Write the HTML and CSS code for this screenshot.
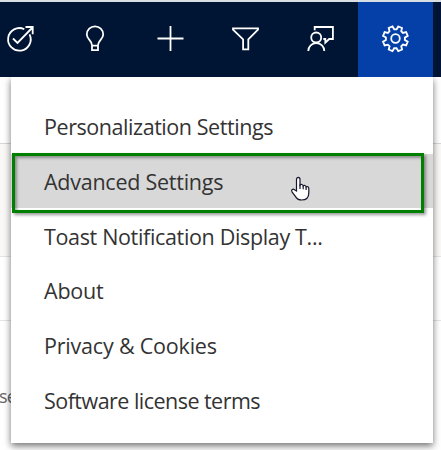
FILE: index.html
```html
<!DOCTYPE html>
<html lang="en">
<head>
<meta charset="utf-8">
<title>Settings</title>
<link rel="stylesheet" href="styles.css">
</head>
<body>
<header class="bar">
  <div class="cell"><svg viewBox="1 0 32 32"><path d="M20.300 7.200A11.300 11.300 0 1 0 25.500 12.300M9 16.500l4.500 4.500L28 6M21.500 5h7.200v7.200"/></svg></div>
  <div class="cell"><svg viewBox="0 0 32 32"><path d="M12 23.200c0-5-5.200-5.800-5.200-10.700a8.200 8.200 0 0 1 16.400 0c0 4.900-5.200 5.700-5.200 10.700v5h-6zM12 23.700h6"/></svg></div>
  <div class="cell"><svg viewBox="0 0 32 32"><path d="M15.500 4v25M2.500 16.500h26"/></svg></div>
  <div class="cell"><svg viewBox="0 0 32 32"><path d="M3 6.300h25v1.300L18.300 17.300v10h-5.200v-10L3 7.600z"/></svg></div>
  <div class="cell"><svg viewBox="0 0 32 32"><path d="M9.700 8.300V5h18.200v12h-3.700l-3.900 3.700V17h-2"/><circle cx="11.200" cy="15.500" r="5"/><path d="M3.300 29a8 8 0 0 1 16 0"/></svg></div>
  <div class="cell active"><svg viewBox="0 0 32 32"><path transform="translate(-.5 0) rotate(22.500 16 16.500)" d="M14 4.300h4l.5 3.300 2.200.9 2.700-2 2.900 2.900-2 2.700.9 2.200 3.300.5v4l-3.300.5-.9 2.200 2 2.700-2.900 2.900-2.700-2-2.200.9-.5 3.300h-4l-.5-3.300-2.200-.9-2.700 2-2.900-2.900 2-2.700-.9-2.200-3.300-.5v-4l3.300-.5.900-2.200-2-2.700 2.900-2.900 2.700 2 2.200-.9z"/><circle cx="15.500" cy="16.500" r="4.300"/></svg></div>
</header>
<main class="page">
  <section class="band top"></section>
  <section class="band shaded"></section>
  <section class="band row"></section>
  <section class="band last">se</section>
</main>
<nav class="menu">
  <a class="item personal"><span>Personalization Settings</span></a>
  <a class="item advanced"><span>Advanced Settings</span></a>
  <a class="item toast"><span>Toast Notification Display T...</span></a>
  <a class="item about"><span>About</span></a>
  <a class="item privacy"><span>Privacy &amp; Cookies</span></a>
  <a class="item license"><span>Software license terms</span></a>
</nav>
<div class="callout"></div>
<svg class="pointer" viewBox="0 0 20 26"><path d="M6.500 15V3.500c0-2.800 3.500-2.800 3.500 0V9c1-1 3-.6 3.200.8 1-.8 2.600-.3 2.900 1 1.300-.7 2.700.2 2.700 1.700v4.200c0 4.600-2.500 7.300-7.300 7.300-3.300 0-5-1.500-6.300-3.900L2 15.900c-1.200-2.200 1-3.500 2.500-2.200z"/><path d="M10 8.500V13M13.200 9.800V13.300M16.100 11V14"/></svg>
</body>
</html>
```
FILE: styles.css
```css
* { box-sizing: border-box; }
body {
  margin: 0;
  width: 441px;
  height: 450px;
  overflow: hidden;
  position: relative;
  background: #fff;
  font-family: "Open Sans", "Noto Sans", sans-serif;
}
.bar {
  display: flex;
  height: 77px;
  border-top: 2px solid #d8dfe4;
  background: #001433;
}
.cell {
  flex: 0 0 75px;
  display: flex;
  align-items: center;
  justify-content: center;
}
.cell:first-child { margin-left: -17px; }
.active { background: #0540a9; }
.cell svg {
  width: 32px;
  height: 32px;
  margin-top: -4px;
  fill: none;
  stroke: #fff;
  stroke-width: 1.8;
}
.page { height: 373px; }
.band { border-bottom: 1px solid #d8d7d5; }
.top { height: 67px; }
.shaded { height: 113px; background: #faf9f8; border-color: #e5e4e3; }
.row { height: 64px; border-color: #e5e4e3; }
.last {
  height: 129px;
  border: 0;
  padding-top: 63px;
  font-size: 18px;
  line-height: 24px;
  letter-spacing: -0.8px;
  text-indent: -1px;
  color: #666;
}
.menu {
  position: absolute;
  left: 11px;
  top: 77px;
  width: 422px;
  height: 366px;
  padding-top: 22px;
  background: #fff;
  box-shadow: 0 3px 7px rgba(0, 0, 0, .55);
  clip-path: inset(0 -12px -12px -12px);
}
.item {
  display: flex;
  align-items: center;
  height: 54.8px;
  padding: 1px 0 0 33px;
  font-size: 21.5px;
  line-height: 30px;
  color: #333;
  white-space: nowrap;
}
.personal { letter-spacing: -0.44px; padding-top: 2px; }
.advanced {
  letter-spacing: -0.25px;
  padding-top: 3px;
  height: 54px;
  margin-bottom: 0.8px;
  background: #d8d8d8;
}
.toast { letter-spacing: -0.34px; padding-top: 2px; }
.about { letter-spacing: -0.2px; }
.privacy { letter-spacing: -0.2px; }
.license { letter-spacing: -0.53px; padding-top: 2px; }
.callout {
  position: absolute;
  left: 12px;
  top: 153px;
  width: 412px;
  height: 60px;
  border: 3px solid #008000;
  box-shadow: 2px 2px 3px rgba(0, 0, 0, .4), inset 2px 2px 3px rgba(0, 0, 0, .35);
}
.pointer {
  position: absolute;
  left: 290px;
  top: 176px;
  width: 20px;
  height: 26px;
  fill: #fff;
  stroke: #15152b;
  stroke-width: 1.2;
}
```
